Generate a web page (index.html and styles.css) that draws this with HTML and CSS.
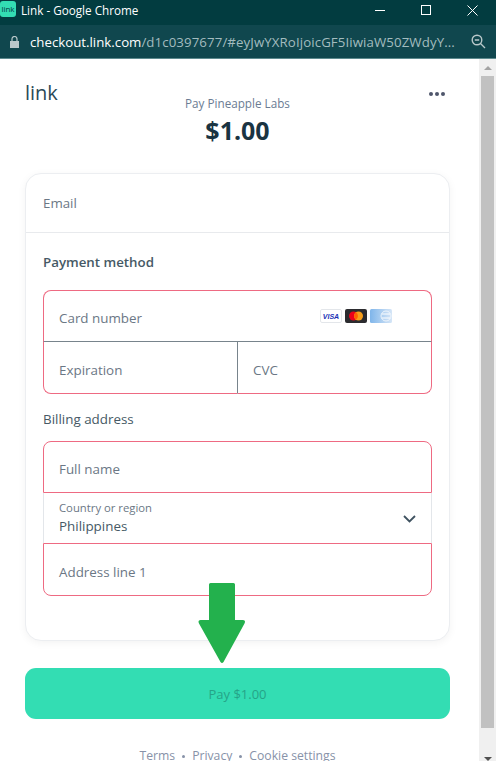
FILE: index.html
```html
<!DOCTYPE html>
<html>
<head>
  <title>Link - Google Chrome</title>
  <meta name="viewport" content="width=device-width, initial-scale=1.0">
  <link rel="stylesheet" href="styles.css">
</head>
<body>
  <div class="window">
    <div class="title-bar">
      <div class="app-icon">link</div>
      <div class="title-text">Link - Google Chrome</div>
      <div class="window-controls">
        <svg width="11" height="2" viewBox="0 0 11 2"><path d="M0 .5h10" stroke="#fff" fill="none"/></svg>
        <svg width="11" height="11" viewBox="0 0 11 11"><rect x=".5" y=".5" width="9" height="9" stroke="#fff" fill="none"/></svg>
        <svg width="11" height="11" viewBox="0 0 11 11"><path d="M.5.5l10 10M10.5.5l-10 10" stroke="#fff" fill="none"/></svg>
      </div>
    </div>

    <div class="address-bar">
      <svg class="lock" width="9" height="12" viewBox="0 0 9 12"><path d="M0 5h9v7H0z" fill="#b9c8ca"/><path d="M2 5.500V3a2.500 2.500 0 0 1 5 0v2.500" stroke="#b9c8ca" stroke-width="1.200" fill="none"/></svg>
      <div class="url"><span class="host">checkout.link.com</span><span class="path">/d1c0397677/#eyJwYXRoIjoicGF5IiwiaW50ZWdyY...</span></div>
      <svg class="zoom" width="15" height="15" viewBox="0 0 15 15"><circle cx="6" cy="6" r="4.800" stroke="#b9c8ca" stroke-width="1.400" fill="none"/><path d="M3.800 6h4.400M9.500 9.500l4.500 4.500" stroke="#b9c8ca" stroke-width="1.400" fill="none"/></svg>
    </div>

    <div class="viewport">
      <div class="page">
        <div class="header">
          <div class="logo">link</div>
          <div class="summary">
            <div class="merchant">Pay Pineapple Labs</div>
            <div class="amount">$1.00</div>
          </div>
          <div class="more"><span></span><span></span><span></span></div>
        </div>

        <div class="card">
          <div class="email-row">Email</div>
          <div class="card-body">
            <div class="section-title">Payment method</div>

            <div class="group">
              <div class="field field-top">
                <span>Card number</span>
                <div class="brands">
                  <svg width="22" height="14" viewBox="0 0 22 14"><rect x=".5" y=".5" width="21" height="13" rx="1.500" fill="#fff" stroke="#e3e6ea"/><text x="11" y="10" text-anchor="middle" class="visa">VISA</text></svg>
                  <svg width="22" height="14" viewBox="0 0 22 14"><rect width="22" height="14" rx="2" fill="#2b2b2f"/><circle cx="8.500" cy="7" r="4.500" fill="#eb001b"/><circle cx="13.500" cy="7" r="4.500" fill="#f79e1b"/><path d="M11 3.300a4.500 4.500 0 0 1 0 7.400a4.500 4.500 0 0 1 0-7.400z" fill="#ff5f00"/></svg>
                  <svg width="22" height="14" viewBox="0 0 22 14"><defs><linearGradient id="amex"><stop offset="0" stop-color="#7fb5ea"/><stop offset="1" stop-color="#d6e6f7"/></linearGradient></defs><rect width="22" height="14" rx="1.500" fill="url(#amex)"/><circle cx="16" cy="7" r="5" fill="none" stroke="#eef5fc"/><path d="M12 5h8M12 9h8" stroke="#fff" fill="none"/></svg>
                </div>
              </div>
              <div class="field-split">
                <div class="field field-left">Expiration</div>
                <div class="field field-right">CVC</div>
              </div>
            </div>

            <div class="billing-label">Billing address</div>

            <div class="group">
              <div class="field field-top field-name">Full name</div>
              <div class="country">
                <div>
                  <div class="country-label">Country or region</div>
                  <div class="country-value">Philippines</div>
                </div>
                <svg class="chevron" width="13" height="8" viewBox="0 0 13 8"><path d="M1 1l5.500 5.500L12 1" stroke="#3f5260" stroke-width="1.800" fill="none"/></svg>
              </div>
              <div class="field field-address">Address line 1</div>
            </div>
          </div>
        </div>

        <button class="pay-button">Pay $1.00</button>

        <div class="footer">
          <a>Terms</a><i></i><a>Privacy</a><i></i><a>Cookie settings</a>
        </div>

        <svg class="arrow" width="48" height="81" viewBox="0 0 48 81"><path d="M11 1.500q0-1.500 1.500-1.500h23q1.500 0 1.500 1.500V37h8q2 0 2 1.500q0 1-.500 2L25.500 79q-1.500 2-3 0L1 40.500q-.500-1-.500-2Q.500 37 2.500 37H11z" fill="#23b14d"/></svg>
      </div>

      <div class="scrollbar">
        <div class="scroll-up"></div>
        <div class="scroll-thumb"></div>
        <div class="scroll-down"></div>
      </div>
    </div>
  </div>
</body>
</html>
```

FILE: styles.css
```css
html,
body {
  margin: 0;
  height: 100%;
  overflow: hidden;
}

body {
  font-family: "Open Sans", "Noto Sans", sans-serif;
  background-color: #fff;
}

.window {
  display: flex;
  flex-direction: column;
  height: 761px;
}

.title-bar {
  display: flex;
  align-items: center;
  height: 25px;
  background-color: #023c40;
  color: #fff;
  flex-shrink: 0;
}

.app-icon {
  width: 16px;
  height: 16px;
  border-radius: 3px;
  background-color: #33ddb3;
  color: #023c40;
  font-size: 8px;
  line-height: 16px;
  text-align: center;
  margin-bottom: 7px;
}

.title-text {
  font-size: 11.7px;
  margin: 0 0 5px 5px;
  flex: 1;
}

.window-controls {
  display: flex;
  align-items: center;
  gap: 35px;
  margin-right: 18px;
  height: 20px;
  margin-bottom: 4px;
}

.address-bar {
  display: flex;
  align-items: center;
  height: 34px;
  background-color: #10474e;
  border-bottom: 1px solid #5d8a8e;
  box-sizing: border-box;
  flex-shrink: 0;
  padding-left: 10px;
}

.url {
  flex: 1;
  font-size: 13.25px;
  color: #a3bcbf;
  margin-left: 11px;
  white-space: nowrap;
  overflow: hidden;
}

.host {
  color: #fff;
}

.path {
  letter-spacing: 0.1px;
}

.zoom {
  margin-right: 10px;
}

.viewport {
  display: flex;
  flex: 1;
  min-height: 0;
}

.page {
  position: relative;
  width: 479px;
  padding-left: 25px;
  box-sizing: border-box;
  overflow: hidden;
}

.header {
  position: relative;
  height: 114px;
  text-align: center;
  width: 425px;
}

.logo {
  position: absolute;
  left: 0;
  top: 21px;
  font-size: 20px;
  font-weight: 500;
  line-height: 26px;
  color: #2b4a57;
}

.summary {
  padding-top: 35px;
}

.merchant {
  font-size: 11.7px;
  line-height: 18px;
  color: #6b7c93;
}

.amount {
  font-size: 25px;
  font-weight: 700;
  line-height: 36px;
  color: #1a3442;
}

.more {
  position: absolute;
  right: 5px;
  top: 33px;
  display: flex;
  gap: 2px;
}

.more span {
  width: 4px;
  height: 4px;
  border-radius: 50%;
  background-color: #4f566b;
}

.card {
  width: 425px;
  height: 468px;
  box-sizing: border-box;
  border: 1px solid #eceef1;
  border-radius: 16px;
  box-shadow: 0 2px 8px rgba(0, 0, 0, 0.05);
  background-color: #fff;
}

.email-row {
  height: 59px;
  box-sizing: border-box;
  padding: 20px 17px 0;
  border-bottom: 1px solid #e8eaed;
  font-size: 13.3px;
  line-height: 18px;
  color: #6b7785;
}

.card-body {
  padding: 20px 17px 0;
}

.section-title {
  font-size: 13.3px;
  font-weight: 600;
  line-height: 18px;
  color: #465965;
  margin-bottom: 19px;
}

.group {
  width: 389px;
  box-sizing: border-box;
}

.field {
  height: 52px;
  box-sizing: border-box;
  padding: 18px 14px 0 15px;
  font-size: 13.4px;
  line-height: 18px;
  color: #6b7785;
  border: 1px solid #ee6a82;
}

.field-top {
  display: flex;
  justify-content: space-between;
  border-radius: 8px 8px 0 0;
  border-bottom-color: #78848c;
}

.brands {
  display: flex;
  gap: 3px;
  margin: 0 25px 0 0;
}

.visa {
  font-family: "Liberation Sans", sans-serif;
  font-size: 7px;
  font-style: italic;
  font-weight: 700;
  fill: #1a2fb5;
}

.field-split {
  display: flex;
}

.field-left {
  width: 195px;
  padding-top: 19px;
  border-top: none;
  border-right: 1px solid #78848c;
  border-radius: 0 0 0 8px;
}

.field-right {
  flex: 1;
  padding-top: 19px;
  border-top: none;
  border-left: none;
  border-radius: 0 0 8px 0;
}

.billing-label {
  font-size: 13.4px;
  line-height: 18px;
  color: #465965;
  margin: 16px 0 13px;
}

.field-name {
  display: block;
  border-bottom-color: #ee6a82;
}

.country {
  display: flex;
  justify-content: space-between;
  align-items: center;
  height: 50px;
  box-sizing: border-box;
  padding: 0 15px 2px;
  border-left: 1px solid #e3e6ea;
  border-right: 1px solid #e3e6ea;
}

.chevron {
  margin-top: 4px;
}

.country-label {
  font-size: 11.3px;
  line-height: 15px;
  color: #6b7785;
  margin-bottom: 2px;
}

.country-value {
  font-size: 13.4px;
  line-height: 18px;
  color: #465965;
}

.field-address {
  height: 53px;
  padding-top: 19px;
  border-radius: 0 0 8px 8px;
}

.pay-button {
  display: block;
  width: 425px;
  height: 51px;
  margin-top: 27px;
  border: none;
  border-radius: 11px;
  background-color: #33ddb3;
  color: #25a488;
  font-family: inherit;
  font-size: 13px;
  font-weight: 500;
}

.footer {
  display: flex;
  justify-content: center;
  align-items: center;
  gap: 7px;
  width: 425px;
  margin-top: 28px;
  font-size: 12.2px;
  line-height: 18px;
  color: #8792a8;
}

.footer i {
  width: 3px;
  height: 3px;
  border-radius: 50%;
  background-color: #8792a8;
}

.arrow {
  position: absolute;
  left: 198px;
  top: 524px;
}

.scrollbar {
  display: flex;
  flex-direction: column;
  width: 17px;
  background-color: #f0f0f0;
  flex-shrink: 0;
}

.scroll-up {
  height: 17px;
  position: relative;
}

.scroll-down {
  height: 33px;
  position: relative;
}

.scroll-up::before {
  content: "";
  position: absolute;
  left: 5px;
  top: 7px;
  border: 4px solid transparent;
  border-top: none;
  border-bottom: 4px solid #a3a3a3;
}

.scroll-down::before {
  content: "";
  position: absolute;
  left: 5px;
  top: 29px;
  border: 4px solid transparent;
  border-bottom: none;
  border-top: 4px solid #505050;
}

.scroll-thumb {
  flex: 1;
  margin: 0 2px;
  background-color: #c1c1c1;
}
```
